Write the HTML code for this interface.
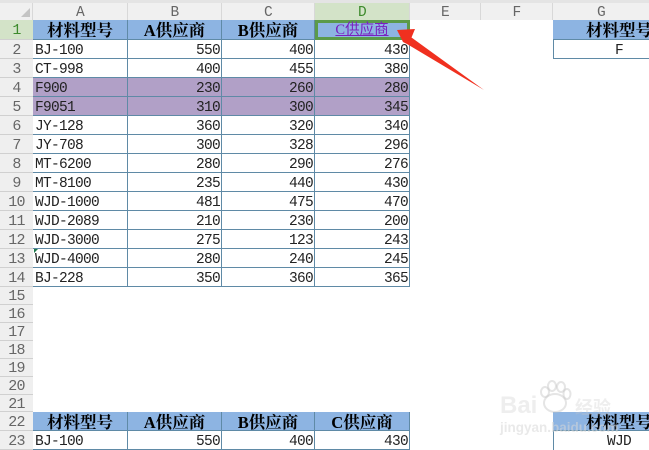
<!DOCTYPE html>
<html><head><meta charset="utf-8">
<style>
html,body{margin:0;padding:0;background:#fff}
#p{position:relative;width:649px;height:450px;overflow:hidden;background:#fff;font-family:"Liberation Mono","Noto Serif CJK SC",monospace;font-size:14.5px;letter-spacing:-.7px;color:#222}
#p div{position:absolute;white-space:nowrap}
.bar{left:0;top:0;width:649px;height:3px;background:#e4e4e4}
.ch{top:3px;height:17px;line-height:20px;background:#f0f0f0;text-align:center;color:#666;border-right:1px solid #d8d8d8;box-sizing:border-box;font-size:14.5px}
.rh{left:0;width:33px;background:#efefef;text-align:center;color:#666;border-bottom:1px solid #d0d0d0;box-sizing:border-box;font-size:15px;padding-top:1px}
.r{height:19px;line-height:23px;left:33px;width:377px}
.h{background:#8db4e2}
.p{background:#b1a0c7}
.a,.b,.c,.d{top:0;height:19px;box-sizing:border-box;border-right:1px solid #5f8aa6;border-bottom:1px solid #5f8aa6}
.a{left:0;width:95px;padding-left:2px}
.b{left:95px;width:94px;text-align:right;padding-right:1px}
.c{left:189px;width:93px;text-align:right;padding-right:1px}
.d{left:282px;width:95px;text-align:right;padding-right:1px}
.h div{text-align:center;padding:0;font:bold 16.500px/21px "Liberation Serif","Noto Serif CJK SC",serif;letter-spacing:0;color:#000}
</style></head><body>
<div id="p">
<div class="bar"></div>
<div class="ch" style="left:0;width:33px"></div>
<div style="left:21px;top:8px;width:0;height:0;border-left:9px solid transparent;border-bottom:9px solid #c4c4c4"></div>
<div class="ch" style="left:33px;width:95px">A</div>
<div class="ch" style="left:128px;width:94px">B</div>
<div class="ch" style="left:222px;width:93px">C</div>
<div class="ch" style="left:315px;width:95px;background:#d3e3c8;color:#3d8a2c">D</div>
<div class="ch" style="left:410px;width:71px">E</div>
<div class="ch" style="left:481px;width:72px">F</div>
<div class="ch" style="left:553px;width:96px;border-right:0">G</div>

<div class="rh" style="top:20px;height:20px;line-height:20px;background:#d3e3c8;color:#3d8a2c">1</div>
<div class="rh" style="top:40px;height:19px;line-height:19px">2</div>
<div class="rh" style="top:59px;height:19px;line-height:19px">3</div>
<div class="rh" style="top:78px;height:19px;line-height:19px">4</div>
<div class="rh" style="top:97px;height:19px;line-height:19px">5</div>
<div class="rh" style="top:116px;height:19px;line-height:19px">6</div>
<div class="rh" style="top:135px;height:19px;line-height:19px">7</div>
<div class="rh" style="top:154px;height:19px;line-height:19px">8</div>
<div class="rh" style="top:173px;height:19px;line-height:19px">9</div>
<div class="rh" style="top:192px;height:19px;line-height:19px">10</div>
<div class="rh" style="top:211px;height:19px;line-height:19px">11</div>
<div class="rh" style="top:230px;height:19px;line-height:19px">12</div>
<div class="rh" style="top:249px;height:19px;line-height:19px">13</div>
<div class="rh" style="top:268px;height:19px;line-height:19px">14</div>
<div class="rh" style="top:287px;height:18px;line-height:18px">15</div>
<div class="rh" style="top:305px;height:18px;line-height:18px">16</div>
<div class="rh" style="top:323px;height:18px;line-height:18px">17</div>
<div class="rh" style="top:341px;height:18px;line-height:18px">18</div>
<div class="rh" style="top:359px;height:18px;line-height:18px">19</div>
<div class="rh" style="top:377px;height:18px;line-height:18px">20</div>
<div class="rh" style="top:395px;height:17px;line-height:17px">21</div>
<div class="rh" style="top:412px;height:19px;line-height:19px">22</div>
<div class="rh" style="top:431px;height:19px;line-height:19px">23</div>

<div class="r h" style="top:20px;height:20px">
<div class="a" style="height:20px">材料型号</div><div class="b" style="height:20px">A供应商</div><div class="c" style="height:20px">B供应商</div><div class="d" style="height:20px"></div>
</div>
<div class="r" style="top:40px"><div class="a">BJ-100</div><div class="b">550</div><div class="c">400</div><div class="d">430</div></div>
<div class="r" style="top:59px"><div class="a">CT-998</div><div class="b">400</div><div class="c">455</div><div class="d">380</div></div>
<div class="r p" style="top:78px"><div class="a">F900</div><div class="b">230</div><div class="c">260</div><div class="d">280</div></div>
<div class="r p" style="top:97px"><div class="a">F9051</div><div class="b">310</div><div class="c">300</div><div class="d">345</div></div>
<div class="r" style="top:116px"><div class="a">JY-128</div><div class="b">360</div><div class="c">320</div><div class="d">340</div></div>
<div class="r" style="top:135px"><div class="a">JY-708</div><div class="b">300</div><div class="c">328</div><div class="d">296</div></div>
<div class="r" style="top:154px"><div class="a">MT-6200</div><div class="b">280</div><div class="c">290</div><div class="d">276</div></div>
<div class="r" style="top:173px"><div class="a">MT-8100</div><div class="b">235</div><div class="c">440</div><div class="d">430</div></div>
<div class="r" style="top:192px"><div class="a">WJD-1000</div><div class="b">481</div><div class="c">475</div><div class="d">470</div></div>
<div class="r" style="top:211px"><div class="a">WJD-2089</div><div class="b">210</div><div class="c">230</div><div class="d">200</div></div>
<div class="r" style="top:230px"><div class="a">WJD-3000</div><div class="b">275</div><div class="c">123</div><div class="d">243</div></div>
<div class="r" style="top:249px"><div class="a">WJD-4000</div><div class="b">280</div><div class="c">240</div><div class="d">245</div></div>
<div class="r" style="top:268px"><div class="a">BJ-228</div><div class="b">350</div><div class="c">360</div><div class="d">365</div></div>
<div style="left:34px;top:249px;width:0;height:0;border-top:4px solid #1f7a4d;border-right:4px solid transparent"></div>

<div style="left:315px;top:20px;width:95px;height:20px;box-sizing:border-box;border:3px solid #5b9a4a"></div>
<div style="left:315px;top:20px;width:94px;height:20px;line-height:21px;text-align:center;color:#7a1fc0;font-family:'Liberation Serif','Noto Sans CJK SC',sans-serif;font-size:14.500px;letter-spacing:0;text-decoration:underline">C供应商</div>

<div class="r h" style="top:412px"><div class="a">材料型号</div><div class="b">A供应商</div><div class="c">B供应商</div><div class="d">C供应商</div></div>
<div class="r" style="top:431px"><div class="a">BJ-100</div><div class="b">550</div><div class="c">400</div><div class="d">430</div></div>

<div style="left:553px;top:20px;width:96px;height:20px;background:#8db4e2;font:bold 16.500px/21px 'Liberation Serif','Noto Serif CJK SC',serif;letter-spacing:0;color:#000;padding-left:33px;box-sizing:border-box;border-bottom:1px solid #5f8aa6">材料型号</div>
<div style="left:553px;top:40px;width:131px;height:19px;line-height:23px;text-align:center;box-sizing:border-box;border-left:1px solid #5f8aa6;border-bottom:1px solid #5f8aa6">F</div>

<div style="left:553px;top:412px;width:96px;height:19px;background:#8db4e2;font:bold 16.500px/21px 'Liberation Serif','Noto Serif CJK SC',serif;letter-spacing:0;color:#000;padding-left:33px;box-sizing:border-box;border-bottom:1px solid #5f8aa6">材料型号</div>
<div style="left:553px;top:431px;width:131px;height:19px;line-height:23px;text-align:center;box-sizing:border-box;border-left:1px solid #5f8aa6">WJD</div>

<div style="left:500px;top:391px;font:bold 24px/30px 'Liberation Sans',sans-serif;letter-spacing:0;color:rgba(200,200,200,.3)">Bai</div>
<div style="left:575px;top:396px;font:bold 18px/22px 'Noto Sans CJK SC',sans-serif;letter-spacing:0;color:rgba(200,200,200,.3)">经验</div>
<div style="left:500px;top:420px;font:bold 13.500px/16px 'Liberation Sans',sans-serif;letter-spacing:0;color:rgba(215,215,215,.55)">jingyan.baidu.com</div>
<svg style="position:absolute;left:537px;top:379px" width="36" height="36" viewBox="0 0 36 36"><g fill="none" stroke="rgba(190,190,190,.4)" stroke-width="2"><ellipse cx="18" cy="24" rx="11" ry="9"/><ellipse cx="8" cy="13" rx="4" ry="5"/><ellipse cx="15" cy="7" rx="4" ry="5"/><ellipse cx="24" cy="8" rx="4" ry="5"/><ellipse cx="30" cy="15" rx="3.500" ry="5"/></g></svg>

<svg style="position:absolute;left:0;top:0" width="649" height="450" viewBox="0 0 649 450"><path d="M397 30 L415 29 L411.500 37.500 L484 90 L407 44 L403 42 Z" fill="#f0301f"/></svg>
</div>
</body></html>
